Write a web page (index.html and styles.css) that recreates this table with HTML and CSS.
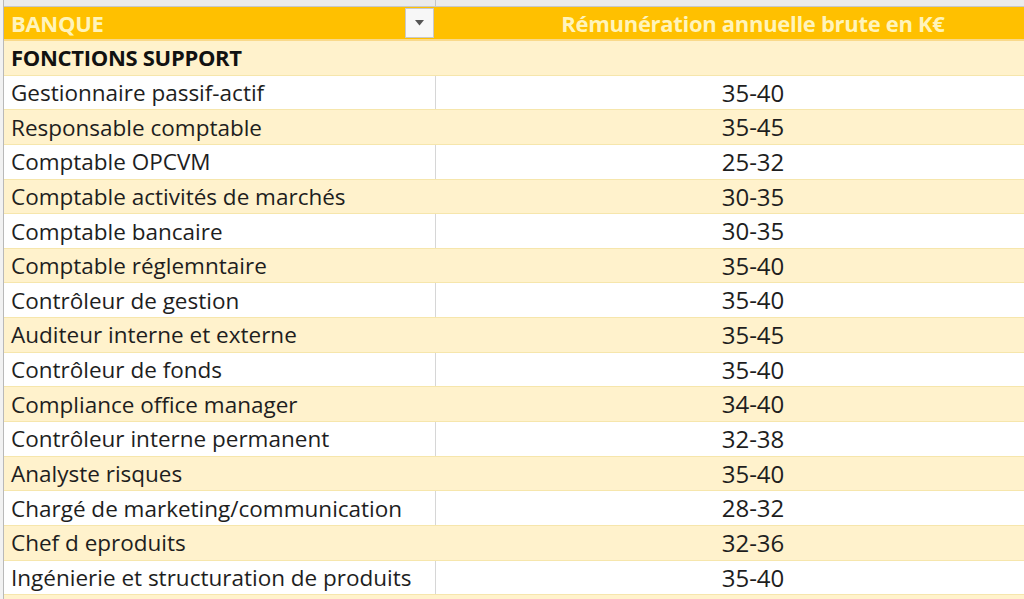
FILE: index.html
```html
<!DOCTYPE html>
<html lang="fr">
<head>
<meta charset="utf-8">
<title>Banque - Rémunération</title>
<link rel="stylesheet" href="styles.css">
</head>
<body>
<div class="sheet">
  <div class="gutter"></div>
  <div class="grid">
    <div class="prev-row"><div class="c1"></div><div class="c2"></div></div>
    <div class="row head">
      <div class="c1"><span>BANQUE</span><span class="dd"><svg width="9" height="6" viewBox="0 0 9 6"><path d="M0 0H9L4.5 5.5Z" fill="#555"/></svg></span></div>
      <div class="c2">Rémunération annuelle brute en K€</div>
    </div>
    <div class="row band section"><div class="c1">FONCTIONS SUPPORT</div><div class="c2"></div></div>
    <div class="row"><div class="c1">Gestionnaire passif-actif</div><div class="c2">35-40</div></div>
    <div class="row band"><div class="c1">Responsable comptable</div><div class="c2">35-45</div></div>
    <div class="row"><div class="c1">Comptable OPCVM</div><div class="c2">25-32</div></div>
    <div class="row band"><div class="c1">Comptable activités de marchés</div><div class="c2">30-35</div></div>
    <div class="row"><div class="c1">Comptable bancaire</div><div class="c2">30-35</div></div>
    <div class="row band"><div class="c1">Comptable réglemntaire</div><div class="c2">35-40</div></div>
    <div class="row"><div class="c1">Contrôleur de gestion</div><div class="c2">35-40</div></div>
    <div class="row band"><div class="c1">Auditeur interne et externe</div><div class="c2">35-45</div></div>
    <div class="row"><div class="c1">Contrôleur de fonds</div><div class="c2">35-40</div></div>
    <div class="row band"><div class="c1">Compliance office manager</div><div class="c2">34-40</div></div>
    <div class="row"><div class="c1">Contrôleur interne permanent</div><div class="c2">32-38</div></div>
    <div class="row band"><div class="c1">Analyste risques</div><div class="c2">35-40</div></div>
    <div class="row"><div class="c1">Chargé de marketing/communication</div><div class="c2">28-32</div></div>
    <div class="row band"><div class="c1">Chef d eproduits</div><div class="c2">32-36</div></div>
    <div class="row"><div class="c1">Ingénierie et structuration de produits</div><div class="c2">35-40</div></div>
    <div class="row band"><div class="c1"></div><div class="c2"></div></div>
  </div>
</div>
</body>
</html>
```
FILE: styles.css
```css
html, body {
  margin: 0;
  padding: 0;
  background: #ffffff;
  overflow: hidden;
  width: 1024px;
  height: 599px;
}
.sheet {
  display: flex;
  height: 599px;
  overflow: hidden;
  font-family: "Open Sans", "Noto Sans", sans-serif;
  color: #1e1e1e;
}
.gutter {
  width: 3px;
  flex: none;
  background: #f2f2f2;
  border-right: 1px solid #b9b9b9;
}
.grid {
  display: flex;
  flex-direction: column;
  flex: none;
}
.prev-row {
  display: flex;
  flex: none;
  height: 6px;
  background: #ebebeb;
  border-bottom: 1px solid #c8c8c8;
}
.prev-row .c1 {
  width: 431px;
  border-right: 1px solid #c4c4c4;
}
.row {
  display: flex;
  flex: none;
  height: 34.65px;
  box-sizing: border-box;
  border-bottom: 1px solid #f6e6ac;
  font-size: 22.5px;
  line-height: 33px;
  background: #ffffff;
}
.row.band {
  background: #fff2cc;
}
.row .c1 {
  width: 432px;
  box-sizing: border-box;
  padding-left: 7px;
  border-right: 1px solid #d6d6d6;
  white-space: nowrap;
  display: flex;
  align-items: center;
}
.row.band .c1 {
  border-right-color: #fff2cc;
}
.row .c2 {
  width: 634px;
  text-align: center;
  white-space: nowrap;
  font-size: 24px;
}
.row.head {
  height: 34px;
  background: #ffc000;
  border-bottom: 2px solid #f9d98a;
  font-weight: 700;
  font-size: 22px;
  color: #fff4bb;
  letter-spacing: -0.3px;
}
.row.head .c2 {
  font-size: 22px;
}
.row.head .c1 {
  border-right-color: #ffc000;
  justify-content: space-between;
  padding-right: 1px;
}
.dd {
  width: 27px;
  height: 28px;
  background: #f7f7f7;
  border: 1px solid #c9c9c9;
  display: flex;
  align-items: center;
  justify-content: center;
}
.row.section {
  font-weight: 700;
  font-size: 22px;
  color: #111111;
  letter-spacing: -0.3px;
}
```
